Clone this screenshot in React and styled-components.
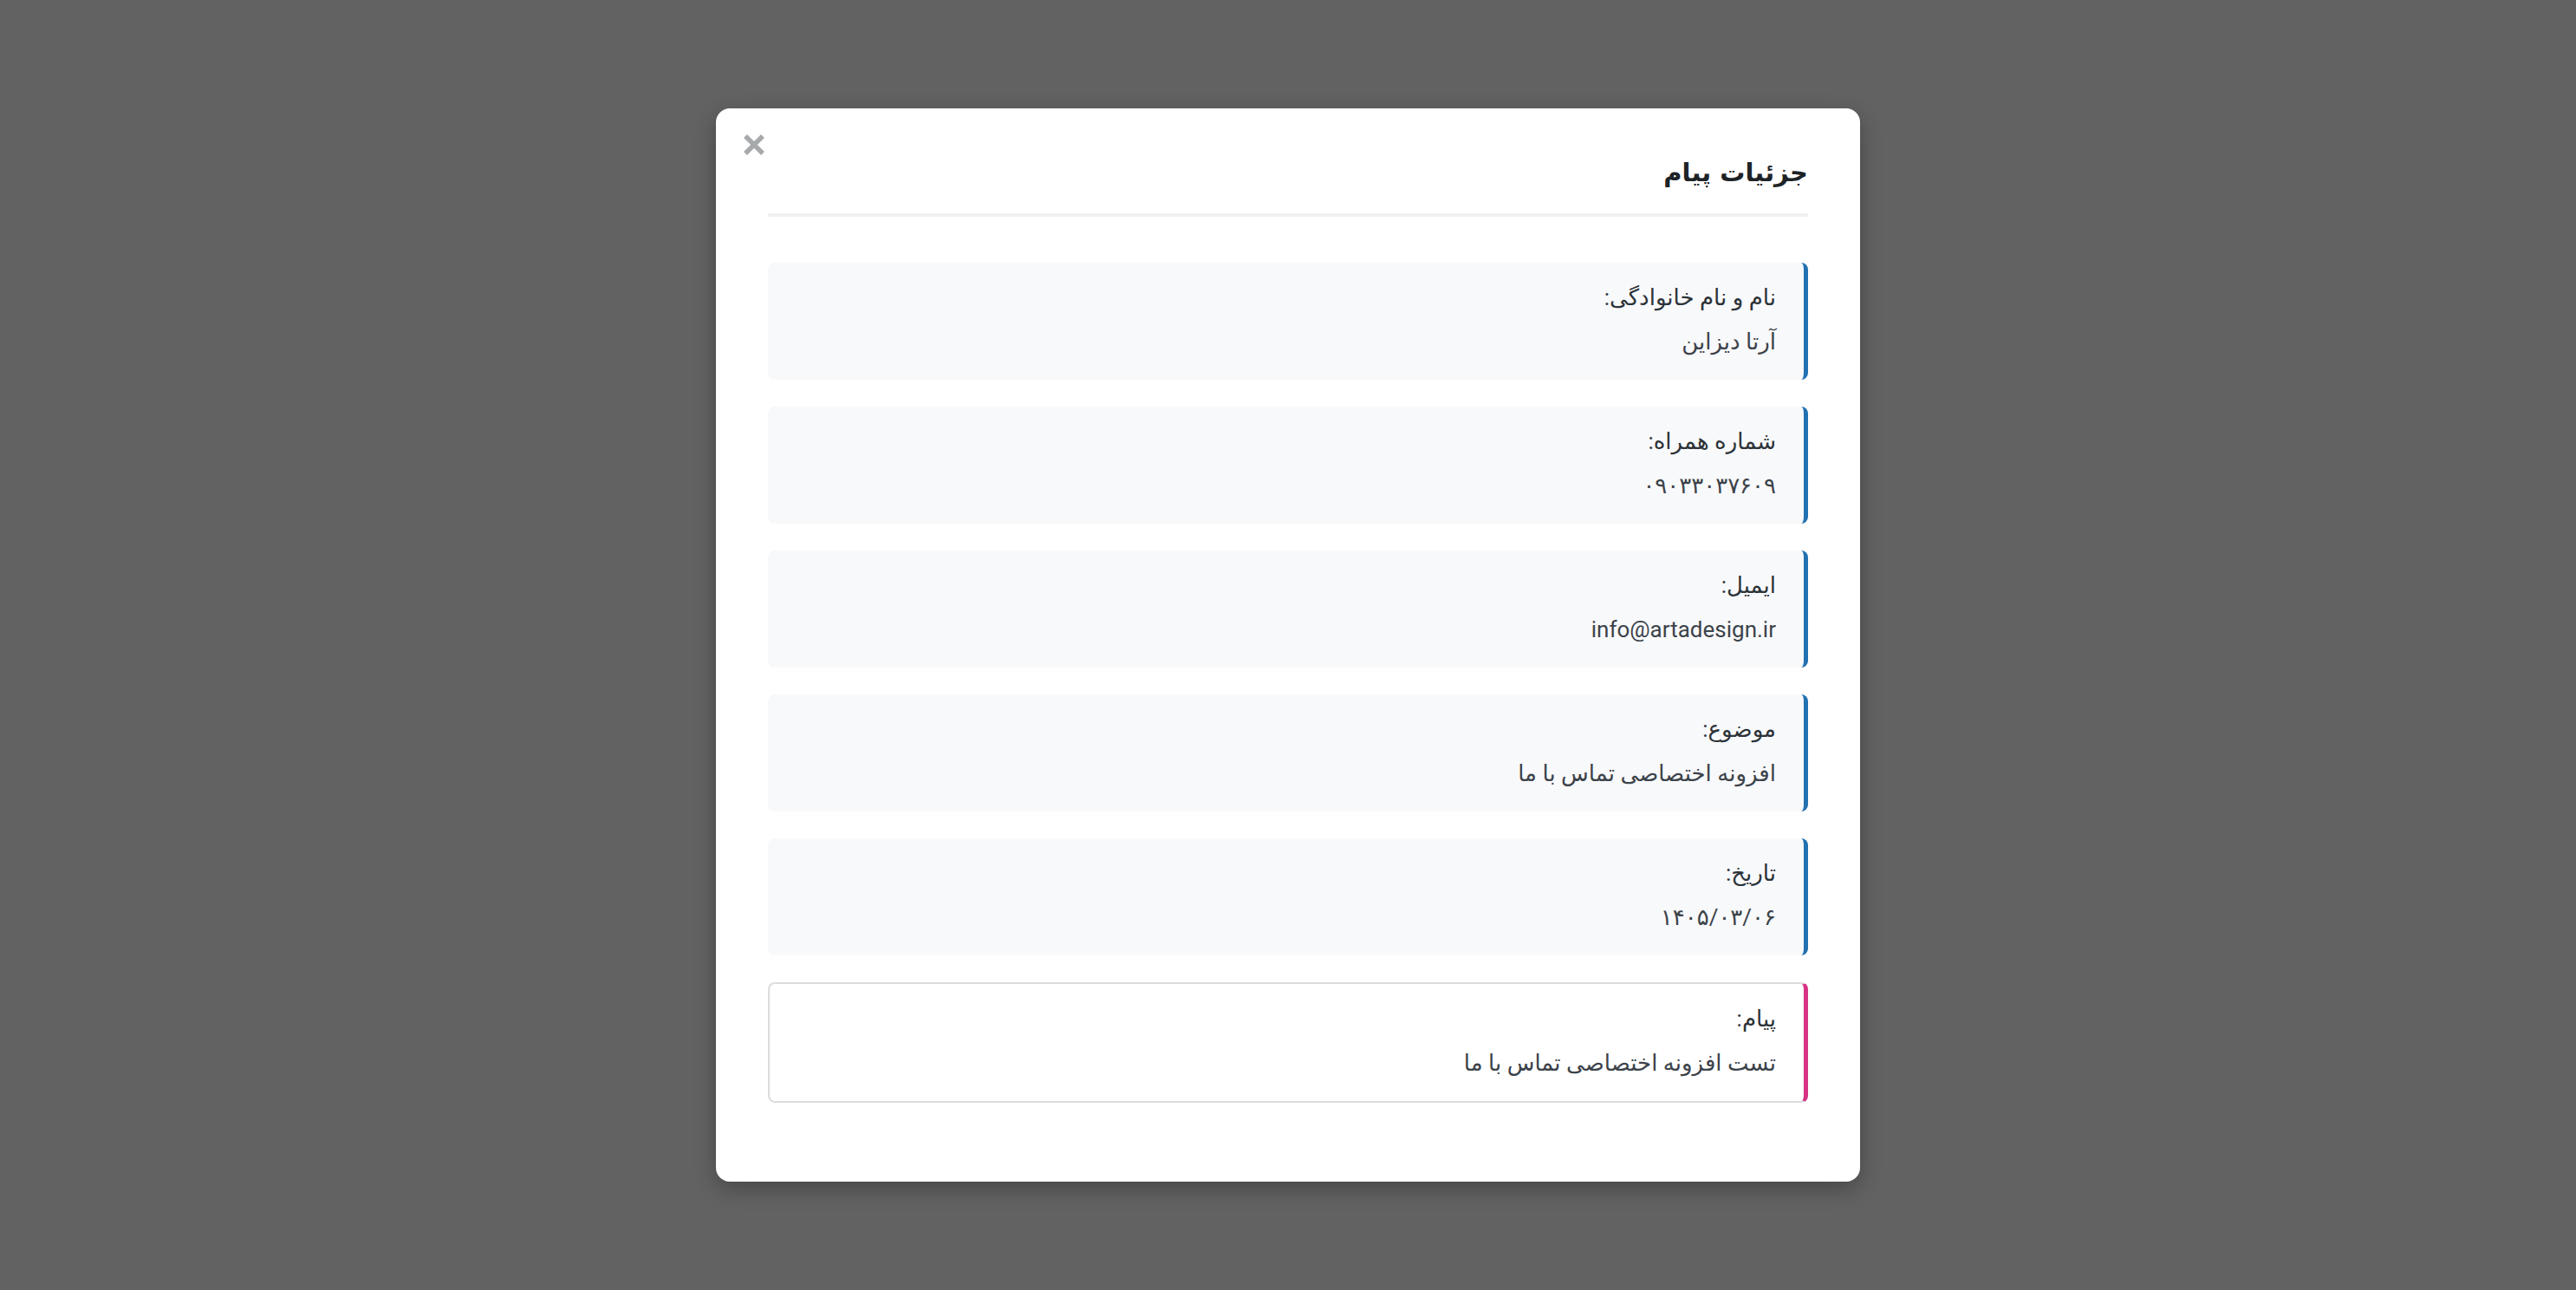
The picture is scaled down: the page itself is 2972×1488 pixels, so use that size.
import React from "react";
import styled, { createGlobalStyle } from "styled-components";

const GlobalStyle = createGlobalStyle`
  html, body {
    margin: 0;
    padding: 0;
    background-color: #626262;
  }
  * {
    box-sizing: border-box;
  }
`;

const fields = [
  { label: "نام و نام خانوادگی:", value: "آرتا دیزاین" },
  { label: "شماره همراه:", value: "۰۹۰۳۳۰۳۷۶۰۹" },
  { label: "ایمیل:", value: "info@artadesign.ir" },
  { label: "موضوع:", value: "افزونه اختصاصی تماس با ما" },
  { label: "تاریخ:", value: "۱۴۰۵/۰۳/۰۶" },
  { label: "پیام:", value: "تست افزونه اختصاصی تماس با ما", message: true }
];

export default function App() {
  return (
    <Overlay>
      <GlobalStyle />
      <Modal dir="rtl">
        <CloseButton aria-label="بستن">
          <svg width="26" height="26" viewBox="0 0 26 26">
            <path
              d="M3 3 L23 23 M23 3 L3 23"
              stroke="#a7aaad"
              strokeWidth="5.5"
              strokeLinecap="butt"
              fill="none"
            />
          </svg>
        </CloseButton>
        <Header>
          <Title>جزئیات پیام</Title>
        </Header>
        <List>
          {fields.map(f => (
            <Field key={f.label} message={f.message}>
              <Label>{f.label}</Label>
              <Value>{f.value}</Value>
            </Field>
          ))}
        </List>
      </Modal>
    </Overlay>
  );
}

const Overlay = styled.div`
  width: 100vw;
  height: 100vh;
  display: flex;
  align-items: center;
  justify-content: center;
  background-color: #626262;
`;

const Modal = styled.div`
  position: relative;
  width: 1320px;
  padding: 50px 60px 91px;
  background-color: #fff;
  border-radius: 16px;
  box-shadow: 0 8px 24px rgba(0, 0, 0, 0.28);
  font-family: Roboto, "DejaVu Sans", sans-serif;
`;

const CloseButton = styled.button`
  position: absolute;
  left: 31px;
  top: 29px;
  width: 26px;
  height: 26px;
  padding: 0;
  border: none;
  background: none;
  cursor: pointer;
  display: flex;

  svg {
    display: block;
  }
`;

const Header = styled.div`
  padding-bottom: 23px;
  border-bottom: 4px solid #f0f0f1;
  margin-bottom: 53px;
`;

const Title = styled.h2`
  margin: 0;
  font-family: "DejaVu Sans", sans-serif;
  font-size: 29px;
  line-height: 48px;
  font-weight: 700;
  color: #1d2327;
`;

const List = styled.div`
  display: flex;
  flex-direction: column;
  gap: 31px;
`;

const Field = styled.div`
  padding: 16px 32px 20px 20px;
  background-color: ${props => (props.message ? "#fff" : "#f8f9fb")};
  border: ${props => (props.message ? "2px solid #dcdcde" : "none")};
  border-right: 5px solid ${props => (props.message ? "#d63384" : "#2271b1")};
  border-radius: 8px;
`;

const Label = styled.div`
  font-size: 26px;
  line-height: 48px;
  color: #2c3338;
`;

const Value = styled.div`
  margin-top: 3px;
  font-size: 26px;
  line-height: 48px;
  color: #3c434a;
`;
